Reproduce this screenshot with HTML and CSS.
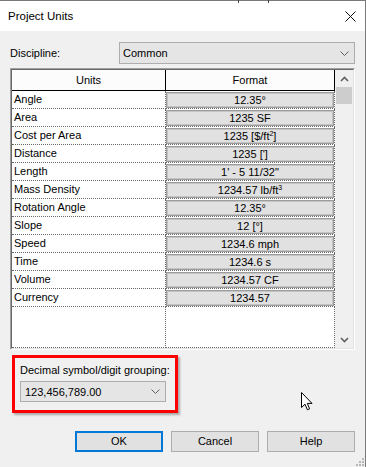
FILE: index.html
```html
<!DOCTYPE html>
<html>
<head>
<meta charset="utf-8">
<link rel="stylesheet" href="styles.css">
</head>
<body>
<div class="window">
  <span class="tick tick-a"></span><span class="tick tick-b"></span>
  <div class="titlebar">
    <span class="title">Project Units</span>
    <svg class="close" width="11" height="11" viewBox="0 0 11 11"><path d="M0.5 0.5 L10.5 10.5 M10.5 0.5 L0.5 10.5" stroke="#111" stroke-width="1" fill="none"/></svg>
  </div>
  <div class="content">
    <div class="discipline">
      <span class="label">Discipline:</span>
      <div class="select select-wide">
        <span>Common</span>
        <svg class="chev" width="9" height="5" viewBox="0 0 9 5"><polyline points="0.5,0.5 4.5,4.5 8.5,0.5" stroke="#606060" fill="none" stroke-width="1"/></svg>
      </div>
    </div>
    <div class="grid">
      <div class="table">
        <div class="thead">
          <div class="th c1">Units</div>
          <div class="th c2">Format</div>
        </div>
        <div class="row"><div class="cell c1">Angle</div><div class="cell c2"><div class="fbtn">12.35°</div></div></div>
        <div class="row"><div class="cell c1">Area</div><div class="cell c2"><div class="fbtn">1235 SF</div></div></div>
        <div class="row"><div class="cell c1">Cost per Area</div><div class="cell c2"><div class="fbtn">1235 [$/ft<sup>2</sup>]</div></div></div>
        <div class="row"><div class="cell c1">Distance</div><div class="cell c2"><div class="fbtn">1235 [']</div></div></div>
        <div class="row"><div class="cell c1">Length</div><div class="cell c2"><div class="fbtn">1' - 5 11/32"</div></div></div>
        <div class="row"><div class="cell c1">Mass Density</div><div class="cell c2"><div class="fbtn">1234.57 lb/ft<sup>3</sup></div></div></div>
        <div class="row"><div class="cell c1">Rotation Angle</div><div class="cell c2"><div class="fbtn">12.35°</div></div></div>
        <div class="row"><div class="cell c1">Slope</div><div class="cell c2"><div class="fbtn">12 [°]</div></div></div>
        <div class="row"><div class="cell c1">Speed</div><div class="cell c2"><div class="fbtn">1234.6 mph</div></div></div>
        <div class="row"><div class="cell c1">Time</div><div class="cell c2"><div class="fbtn">1234.6 s</div></div></div>
        <div class="row"><div class="cell c1">Volume</div><div class="cell c2"><div class="fbtn">1234.57 CF</div></div></div>
        <div class="row"><div class="cell c1">Currency</div><div class="cell c2"><div class="fbtn">1234.57</div></div></div>
        <div class="row filler"><div class="cell c1"></div><div class="cell c2"></div></div>
      </div>
      <div class="scrollbar">
        <div class="sbtn"><svg width="9" height="6" viewBox="0 0 9 6"><polyline points="1,5 4.5,1.5 8,5" stroke="#606060" fill="none" stroke-width="1.6"/></svg></div>
        <div class="thumb"></div>
        <div class="track"></div>
        <div class="sbtn"><svg width="9" height="6" viewBox="0 0 9 6"><polyline points="1,1 4.5,4.5 8,1" stroke="#606060" fill="none" stroke-width="1.6"/></svg></div>
      </div>
    </div>
    <div class="group">
      <div class="group-label">Decimal symbol/digit grouping:</div>
      <div class="select select-small">
        <span>123,456,789.00</span>
        <svg class="chev" width="9" height="5" viewBox="0 0 9 5"><polyline points="0.5,0.5 4.5,4.5 8.5,0.5" stroke="#606060" fill="none" stroke-width="1"/></svg>
      </div>
    </div>
    <div class="buttons">
      <div class="btn btn-default">OK</div>
      <div class="btn">Cancel</div>
      <div class="btn">Help</div>
    </div>
  </div>
  <svg class="cursor" width="14" height="21" viewBox="0 0 14 21"><path d="M1.5 1.5 L1.5 16.5 L5 13.2 L7.4 18.8 L9.6 17.8 L7.3 12.4 L12 12.4 Z" fill="#fff" stroke="#000" stroke-width="1" stroke-linejoin="miter"/></svg>
  <svg class="grip" width="9" height="9" viewBox="0 0 9 9">
    <rect x="6" y="0" width="2" height="2" fill="#b8b8b8"/>
    <rect x="3" y="3" width="2" height="2" fill="#b8b8b8"/>
    <rect x="6" y="3" width="2" height="2" fill="#b8b8b8"/>
    <rect x="0" y="6" width="2" height="2" fill="#b8b8b8"/>
    <rect x="3" y="6" width="2" height="2" fill="#b8b8b8"/>
    <rect x="6" y="6" width="2" height="2" fill="#b8b8b8"/>
  </svg>
</div>
</body>
</html>
```

FILE: styles.css
```css
* { box-sizing: border-box; }
html, body { margin: 0; padding: 0; }
body {
  width: 366px;
  height: 467px;
  overflow: hidden;
  font-family: "Liberation Sans", Arial, sans-serif;
  font-size: 11px;
  color: #000;
  background: #f0f0f0;
}
.window {
  position: relative;
  width: 366px;
  height: 467px;
  background: #f0f0f0;
  border-top: 1px solid #7a7a7a;
  border-right: 1px solid #7a7a7a;
}
.tick {
  position: absolute;
  top: -1px;
  width: 1px;
  height: 3px;
  background: #444;
}
.tick-a { left: 238px; }
.tick-b { left: 268px; }
.titlebar {
  height: 30px;
  background: #fff;
  display: flex;
  align-items: center;
  justify-content: space-between;
  padding: 0 9px 0 8px;
}
.title {
  font-size: 11.5px;
  line-height: 30px;
}
.close { display: block; margin-right: 0; }
.content {
  padding: 11px 10px 0 10px;
}
.discipline {
  display: flex;
  align-items: center;
  height: 22px;
}
.discipline .label { width: 109px; }
.select {
  height: 22px;
  background: #e5e5e5;
  border: 1px solid #adadad;
  display: flex;
  align-items: center;
  justify-content: space-between;
  padding: 0 5px 0 3px;
}
.select-wide { width: 236px; }
.chev { display: block; }
.grid {
  margin-top: 4px;
  width: 345px;
  height: 282px;
  display: flex;
  border: 1px solid;
  border-color: #a0a0a0 #ffffff #ffffff #a0a0a0;
}
.table {
  width: 324px;
  background: #fff;
  border-left: 1px solid #696969;
  border-top: 1px solid #696969;
  border-bottom: 1px solid #e3e3e3;
  display: flex;
  flex-direction: column;
}
.thead {
  display: flex;
  height: 21px;
  background: #fcfcfc;
}
.th {
  border-right: 1px solid #000;
  border-bottom: 1px solid #000;
  text-align: center;
  line-height: 20px;
}
.c1 { width: 154px; }
.c2 { width: 169px; }
.row {
  display: flex;
  height: 18px;
}
.cell {
  border-right: 1px dotted #6a6a6a;
  border-bottom: 1px dotted #6a6a6a;
}
.row .c1 {
  padding-left: 2px;
  line-height: 17px;
}
.row .c2 { padding-top: 1px; }
.filler { height: 41px; }
.fbtn {
  height: 16px;
  background: #e1e1e1;
  border: 1px solid #9c9c9c;
  box-shadow: inset 0 0 0 1px #c4c4c4;
  text-align: center;
  line-height: 14px;
}
sup {
  font-size: 7px;
  vertical-align: top;
  line-height: 9px;
}
.scrollbar {
  width: 19px;
  background: #f0f0f0;
  border-top: 1px solid #696969;
  border-right: 1px solid #e3e3e3;
  border-bottom: 1px solid #e3e3e3;
  display: flex;
  flex-direction: column;
}
.sbtn {
  height: 17px;
  display: flex;
  align-items: center;
  justify-content: center;
}
.thumb {
  margin: 0 0 0 1px;
  width: 16px;
  height: 17px;
  background: #cdcdcd;
}
.track { flex: 1; }
.group {
  margin: 5px 0 0 2px;
  width: 166px;
  height: 58px;
  border: 3px solid #ff0000;
  box-shadow: 2px 2px 2px rgba(0,0,0,0.3);
  padding: 5px 0 0 5px;
}
.group-label {
  line-height: 14px;
  height: 14px;
}
.select-small {
  margin-top: 4px;
  width: 146px;
  height: 21px;
  padding: 0 5px 0 4px;
}
.buttons {
  margin-top: 18px;
  display: flex;
  justify-content: flex-end;
  gap: 8px;
}
.btn {
  width: 88px;
  height: 21px;
  background: #e1e1e1;
  border: 1px solid #adadad;
  text-align: center;
  line-height: 19px;
}
.btn-default {
  border: 2px solid #0078d7;
  line-height: 17px;
}
.cursor {
  position: absolute;
  left: 300px;
  top: 390px;
}
.grip {
  position: absolute;
  left: 356px;
  top: 457px;
}
```
